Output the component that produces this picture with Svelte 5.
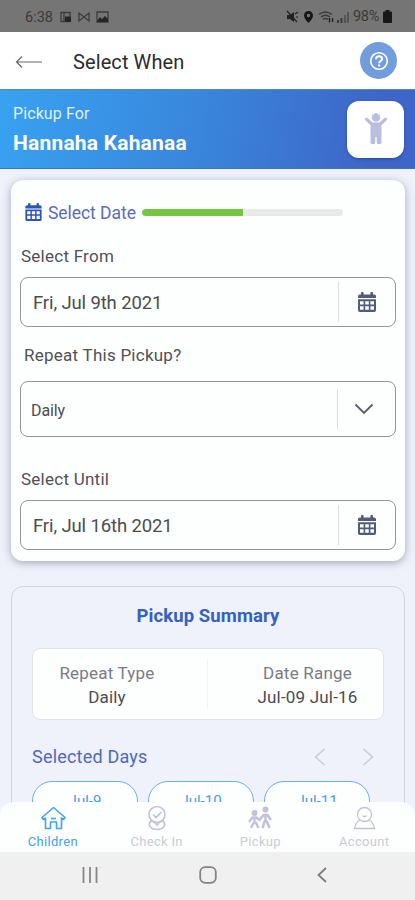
<script lang="ts">
  interface Tab {
    id: string;
    label: string;
  }

  const tabs: Tab[] = [
    { id: 'children', label: 'Children' },
    { id: 'checkin', label: 'Check In' },
    { id: 'pickup', label: 'Pickup' },
    { id: 'account', label: 'Account' }
  ];

  const days = ['Jul-9', 'Jul-10', 'Jul-11'];

  let activeTab = $state('children');
  let progress = $state(50);
</script>

{#snippet calendar()}
  <svg class="calendar" viewBox="0 0 18 20" fill="currentColor">
    <path d="M0 6V4.200Q0 2.500 1.800 2.500H3V.8Q3 0 3.900 0h.8q.9 0 .9.8v1.700h6.800V.8q0-.8.9-.8h.8q.9 0 .9.8v1.700h1.200Q18 2.500 18 4.200V6z" />
    <path
      fill-rule="evenodd"
      d="M0 7.200h18v11q0 1.800-1.800 1.800H1.800Q0 20 0 18.200zM2 9.200v3.400h3.600V9.200zm5.200 0v3.400h3.600V9.200zm5.200 0v3.400H16V9.200zM2 14.300v3.400h3.600v-3.400zm5.200 0v3.400h3.600v-3.400zm5.200 0v3.400H16v-3.400z"
    />
  </svg>
{/snippet}

<div class="screen">
  <div class="status">
    <span class="time">6:38</span>
    <svg class="notifications" width="50" height="12" viewBox="0 0 50 12">
      <g fill="none" stroke="#3c3c3c" stroke-width="1.300">
        <path d="M1 1.500h9v9H1zM4 1.500v9" />
        <path d="M19 10V2l5 4 5-4v8l-5-4z" />
        <path d="M37 1h11v10H37z" />
      </g>
      <path d="M5 5.500h6V11H5zM37 10l3-4 2 2 3-3 3 3v3H37z" fill="#252525" />
    </svg>
    <svg class="signals" width="66" height="14" viewBox="0 0 66 14">
      <path d="M1 5h3l4-3v10L4 9H1z" fill="#222" />
      <path d="M1 1l10 11M9 4l3-2M10 7h2" stroke="#222" stroke-width="1.200" />
      <path d="M22.500 1A4.500 4.500 0 0 0 18 5.500C18 8.700 22.500 13 22.500 13S27 8.700 27 5.500A4.500 4.500 0 0 0 22.500 1zm0 2.800a1.700 1.700 0 1 1 0 3.400 1.700 1.700 0 0 1 0-3.400z" fill="#161616" fill-rule="evenodd" />
      <path d="M33 4.500q6.500-5 13 0M35 7q4.500-3.500 9 0M37 9.300q2.500-1.800 5 0" fill="none" stroke="#3a3a3a" stroke-width="1.500" />
      <path d="M43.500 8v4.500M46.500 8v4" stroke="#222" stroke-width="1.400" />
      <path d="M52 10v3M55.500 8v5" stroke="#3c3c3c" stroke-width="2" />
      <path d="M59 5v8M62 2v11" stroke="#555" stroke-width="2" />
    </svg>
    <span class="percent">98%</span>
    <svg width="9" height="13" viewBox="0 0 9 13">
      <path d="M2.500 0h4v1.500H8q1 0 1 1V12q0 1-1 1H1q-1 0-1-1V2.500q0-1 1-1h1.500z" fill="#171717" />
    </svg>
  </div>

  <header>
    <svg class="back" width="28" height="14" viewBox="0 0 28 14">
      <path d="M27 7H1.500M7 1.500L1.500 7 7 12.500" fill="none" stroke="#666" stroke-width="1.200" />
    </svg>
    <h1>Select When</h1>
    <button class="help" aria-label="Help">
      <svg width="20" height="20" viewBox="0 0 20 20" fill="none" stroke="#fff">
        <circle cx="10" cy="10" r="8.300" stroke-width="1.600" />
        <path d="M7 8.200C7.100 6.200 8.300 5.300 10 5.300c1.800 0 3.100 1 3.100 2.700 0 2.200-3 2-3 4.200" stroke-width="2" />
        <path d="M10.100 13.500v1.900" stroke-width="2" />
      </svg>
    </button>
  </header>

  <section class="banner">
    <div class="child">
      <span class="caption">Pickup For</span>
      <strong>Hannaha Kahanaa</strong>
    </div>
    <div class="avatar">
      <svg width="24" height="32" viewBox="0 0 24 32" fill="#b8bfdf">
        <circle cx="12" cy="4.500" r="4.200" />
        <path d="M2.500 6.200l5.700 5h7.600l5.700-5" fill="none" stroke="#b8bfdf" stroke-width="3.200" stroke-linecap="round" stroke-linejoin="round" />
        <path d="M6.500 10h11v19.500q0 1.500-1.500 1.500h-2q-1.300 0-1.300-1.500V24h-1.400v5.500q0 1.500-1.300 1.500H8q-1.500 0-1.500-1.500z" />
      </svg>
    </div>
  </section>

  <main>
    <section class="card">
      <div class="step">
        {@render calendar()}
        <span>Select Date</span>
        <div class="track"><div class="bar" style="width: {progress}%"></div></div>
      </div>

      <div class="label from">Select From</div>
      <div class="field">
        <span>Fri, Jul 9th 2021</span>
        <div class="addon">{@render calendar()}</div>
      </div>

      <div class="label repeat">Repeat This Pickup?</div>
      <div class="field select">
        <span>Daily</span>
        <div class="addon">
          <svg width="20" height="12" viewBox="0 0 20 12">
            <path d="M1.500 1.500L10 10l8.500-8.500" fill="none" stroke="#5c5d6d" stroke-width="1.800" />
          </svg>
        </div>
      </div>

      <div class="label until">Select Until</div>
      <div class="field">
        <span>Fri, Jul 16th 2021</span>
        <div class="addon">{@render calendar()}</div>
      </div>
    </section>

    <section class="summary">
      <h2>Pickup Summary</h2>
      <div class="details">
        <div class="detail">
          <span class="name">Repeat Type</span>
          <span>Daily</span>
        </div>
        <div class="detail range">
          <span class="name">Date Range</span>
          <span>Jul-09 Jul-16</span>
        </div>
      </div>
      <div class="days-head">
        <h3>Selected Days</h3>
        <svg width="60" height="18" viewBox="0 0 60 18">
          <path d="M10.500 1L1.500 9l9 8M49.500 1l9 8-9 8" fill="none" stroke="#c7c8d0" stroke-width="1.300" />
        </svg>
      </div>
      <div class="days">
        {#each days as day (day)}
          <div class="day">{day}</div>
        {/each}
      </div>
    </section>
  </main>

  <nav class="tabs">
    {#each tabs as tab (tab.id)}
      <button class="tab" class:active={activeTab === tab.id} onclick={() => (activeTab = tab.id)}>
        <svg width="26" height="26" viewBox="0 0 26 26" fill="none" stroke="currentColor" stroke-width="1.600">
          {#if tab.id === 'children'}
            <path d="M2 12.500L13.500 2.500 25 12.500l-1.500 2-2-1.500v10.500h-5v-6.500h-6v6.500h-5V13l-2 1.500z" stroke-linejoin="round" />
            <path d="M11 13.500h5" />
          {:else if tab.id === 'checkin'}
            <circle cx="13" cy="9.500" r="8" />
            <path d="M9 9.500l3 3 5.500-5.500M7 15.500c-4 5 0 9 6 9s10-4 6-9M7 16q3 0 6 4 3-4 6-4" />
          {:else if tab.id === 'pickup'}
            <g fill="currentColor" stroke="none">
              <circle cx="7.500" cy="8" r="2.900" />
              <circle cx="18.500" cy="4.500" r="3" />
            </g>
            <path d="M7.500 12v5M2 17l3.500-4.500h4L13 15.500M7 17l-3 6M8.500 17l3 6" stroke-width="2.400" />
            <path d="M18.500 9v7M12.500 15L16.500 10h4l3.500 5M18 15.500L15.500 23M19.500 15.500L22.500 23" stroke-width="2.500" />
          {:else}
            <circle cx="13.500" cy="9.500" r="7" stroke-width="1.300" />
            <path d="M9 15q-4 1.500-5.500 8.500h20q-1.500-7-5.500-8.500M11.500 10.500q2 2.200 4 0" stroke-width="1.300" />
          {/if}
        </svg>
        <span>{tab.label}</span>
      </button>
    {/each}
  </nav>

  <div class="system">
    <svg width="16" height="16" viewBox="0 0 16 16">
      <path d="M1.500 0v16M8 0v16M14.500 0v16" stroke="#858585" stroke-width="1.800" />
    </svg>
    <svg width="18" height="18" viewBox="0 0 18 18">
      <rect x="1.200" y="1.200" width="15.600" height="15.600" rx="5" fill="none" stroke="#838383" stroke-width="1.800" />
    </svg>
    <svg width="10" height="16" viewBox="0 0 10 16">
      <path d="M9 1L1.500 8 9 15" fill="none" stroke="#7c7c7c" stroke-width="1.800" />
    </svg>
  </div>
</div>

<style>
  :global(body) {
    font-family: Roboto, sans-serif;
    background: #eff2fb;
  }

  .screen {
    display: flex;
    flex-direction: column;
    height: 900px;
    overflow: hidden;
    box-sizing: border-box;
    color: #4b4c50;
  }

  .screen :global(*) {
    box-sizing: border-box;
  }

  svg {
    display: block;
    flex: none;
  }

  h1,
  h2,
  h3 {
    margin: 0;
    font-weight: 400;
  }

  button {
    padding: 0;
    border: 0;
    background: none;
    font-family: inherit;
  }

  .status {
    flex: none;
    display: flex;
    align-items: center;
    height: 32px;
    padding: 1px 23px 0 25px;
    background: #757575;
    color: #3a3a3a;
    font-size: 14.5px;
  }

  .time {
    width: 35px;
    padding-top: 1px;
  }

  .signals {
    margin-left: auto;
    margin-right: 1px;
  }

  .percent {
    width: 30px;
    font-size: 14.500px;
    letter-spacing: -0.3px;
  }

  header {
    flex: none;
    display: flex;
    align-items: center;
    height: 57px;
    padding: 2px 18px 0 15px;
    background: #fff;
  }

  h1 {
    margin-left: 30px;
    font-size: 20px;
    letter-spacing: 0.1px;
    color: #2c2c2c;
  }

  .help {
    display: flex;
    align-items: center;
    justify-content: center;
    width: 37px;
    height: 37px;
    margin: -2px 0 0 auto;
    border-radius: 50%;
    background: #729ddd;
  }

  .banner {
    flex: none;
    display: flex;
    align-items: center;
    justify-content: space-between;
    height: 80px;
    padding: 0 11px 0 13px;
    border-top: 1px solid #4b87d3;
    border-bottom: 1px solid #3a72c6;
    background: linear-gradient(100deg, #38a2f1 0%, #3986dc 48%, #3e65c7 90%);
    color: #fff;
  }

  .child {
    display: flex;
    flex-direction: column;
  }

  .caption {
    font-size: 16px;
    line-height: 22px;
    letter-spacing: 0.1px;
    color: #e0efff;
  }

  strong {
    margin-top: 5px;
    font-size: 21px;
    line-height: 26px;
    letter-spacing: 0.2px;
    font-weight: 700;
  }

  .avatar {
    display: flex;
    align-items: center;
    justify-content: center;
    width: 57px;
    height: 57px;
    border-radius: 12px;
    background: #fff;
    box-shadow: 0 1px 3px rgba(20, 50, 130, 0.5);
  }

  main {
    flex: none;
    height: 683px;
    padding: 11px 10px 0 11px;
    overflow: hidden;
    background: #eff2fb;
  }

  .card {
    height: 381px;
    padding: 20px 9px 0;
    border-radius: 12px;
    background: #fdfefe;
    box-shadow: 0 2px 8px rgba(60, 65, 80, 0.42);
  }

  .step {
    display: flex;
    align-items: center;
    height: 24px;
    padding-left: 5px;
    font-size: 17.500px;
    color: #5a6dbc;
  }

  .calendar {
    width: 18px;
    height: 20px;
    color: #535b7a;
  }

  .step .calendar {
    width: 17px;
    height: 18px;
    margin-right: 6px;
    color: #2a55b5;
  }

  .step span {
    width: 94px;
    padding-top: 1px;
    letter-spacing: -0.05px;
  }

  .track {
    width: 201px;
    height: 7px;
    border-radius: 4px;
    background: #e9e9e9;
    overflow: hidden;
  }

  .bar {
    height: 100%;
    border-radius: 4px 0 0 4px;
    background: #74c540;
  }

  .label {
    padding-left: 1px;
    font-size: 17px;
    line-height: 24px;
    letter-spacing: 0.25px;
    color: #505155;
  }

  .from {
    margin: 20px 0 9px;
  }

  .repeat {
    margin: 16px 0 14px;
    padding-left: 4px;
  }

  .until {
    margin: 30px 0 9px;
  }

  .field {
    display: flex;
    align-items: center;
    justify-content: space-between;
    height: 50px;
    padding-left: 12px;
    border: 1px solid #959595;
    border-radius: 8px;
    font-size: 18.500px;
    letter-spacing: -0.12px;
  }

  .field > span {
    padding-top: 2px;
  }

  .select {
    height: 56px;
    padding-left: 10px;
    font-size: 16px;
  }

  .addon {
    display: flex;
    align-items: center;
    justify-content: center;
    width: 57px;
    height: 40px;
    border-left: 1px solid #dcdce0;
  }

  .select .addon {
    width: 58px;
    padding-right: 6px;
  }

  .summary {
    margin-top: 25px;
    padding: 0 20px;
    height: 300px;
    border: 1px solid #d1d4df;
    border-radius: 12px;
    background: #eff2fb;
  }

  h2 {
    padding: 17px 0 19px;
    font-size: 18.500px;
    line-height: 25px;
    font-weight: 700;
    text-align: center;
    letter-spacing: 0.1px;
    color: #3560c3;
  }

  .details {
    display: flex;
    align-items: center;
    height: 72px;
    border: 1px solid #e1e3e9;
    border-radius: 8px;
    background: #fdfefe;
  }

  .detail {
    flex: none;
    width: 174px;
    display: flex;
    flex-direction: column;
    align-items: center;
    padding: 2px 26px 0 0;
    font-size: 17px;
    line-height: 24px;
    letter-spacing: 0.2px;
  }

  .range {
    width: 176px;
    padding: 2px 0 0 24px;
    border-left: 1px solid #f2f3f5;
  }

  .name {
    color: #7a7b87;
  }

  .days-head {
    display: flex;
    align-items: center;
    justify-content: space-between;
    height: 61px;
    padding: 12px 10px 0 0;
  }

  h3 {
    font-size: 18px;
    letter-spacing: 0.2px;
    color: #4e69bd;
  }

  .days {
    display: flex;
    gap: 10px;
  }

  .day {
    width: 106px;
    height: 40px;
    border: 1px solid #66aee9;
    border-radius: 20px;
    background: #fdfefe;
    font-size: 15px;
    line-height: 39px;
    text-align: center;
    color: #4a9fe2;
  }

  .tabs {
    position: relative;
    flex: none;
    display: flex;
    justify-content: space-between;
    height: 50px;
    margin-top: -50px;
    border-radius: 14px 14px 0 0;
    background: #fdfefe;
  }

  .tab {
    display: flex;
    flex-direction: column;
    align-items: center;
    width: 104px;
    padding: 3px 0 0 2px;
    color: #c3c1da;
    font-size: 13px;
    letter-spacing: 0.3px;
  }

  .tab span {
    margin-top: 3px;
    line-height: 16px;
    color: #cbcad5;
  }

  .tab.active,
  .tab.active span {
    color: #45a2e8;
  }

  .system {
    flex: none;
    display: flex;
    align-items: center;
    justify-content: space-between;
    height: 48px;
    padding: 0 88px 3px 82px;
    background: #f0f0f0;
  }
</style>
